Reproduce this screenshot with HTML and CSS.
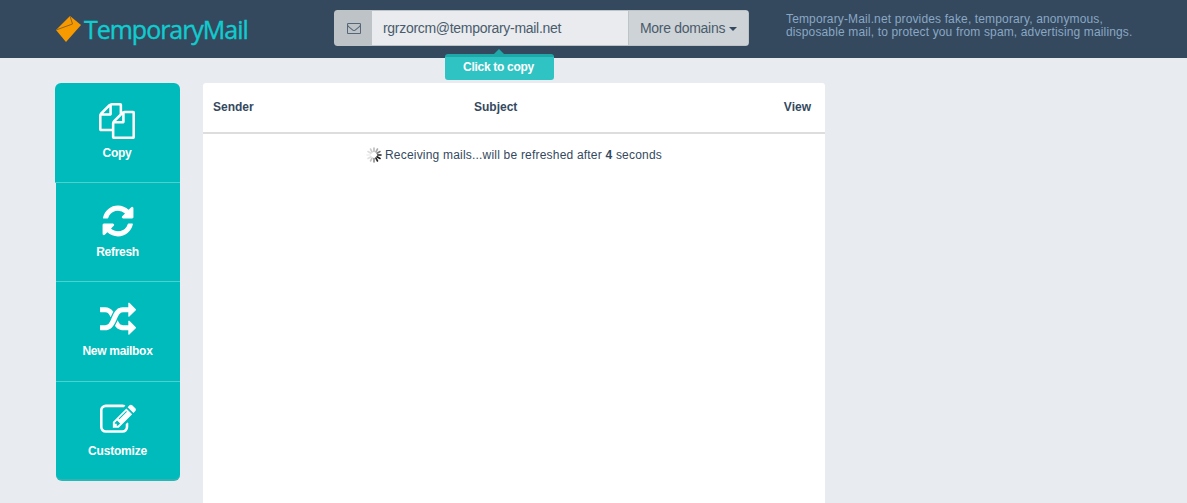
FILE: index.html
```html
<!DOCTYPE html>
<html lang="en">
<head>
<meta charset="utf-8">
<title>TemporaryMail</title>
<link rel="stylesheet" href="styles.css">
</head>
<body>
<header class="topbar">
  <a class="logo">
    <svg class="logo-icon" viewBox="0 0 26 28" aria-hidden="true">
      <path class="env-a" d="M1 15 L15 1 L26 10 L11 27 Z"/>
      <path class="env-line" d="M1 15 L17.500 9 L15 1"/>
    </svg>
    <span>TemporaryMail</span>
  </a>
  <div class="address-group">
    <span class="addon"><svg class="env-icon" viewBox="0 0 1792 1792" aria-hidden="true"><path d="M1664 1504v-768q-32 36-69 66-268 206-426 338-51 43-83 67t-86.5 48.5-102.5 24.5h-2q-48 0-102.5-24.5t-86.5-48.5-83-67q-158-132-426-338-37-30-69-66v768q0 13 9.5 22.5t22.5 9.5h1472q13 0 22.5-9.5t9.5-22.5zm0-1051v-24.5l-.5-13-3-12.5-5.5-9-9-7.5-14-2.5h-1472q-13 0-22.5 9.5t-9.5 22.5q0 168 147 284 193 152 401 317 6 5 35 29.5t46 37.5 44.5 31.5 50.5 27.5 43 9h2q20 0 43-9t50.5-27.5 44.5-31.5 46-37.5 35-29.5q208-165 401-317 54-43 100.5-115.5t46.5-131.5zm128-37v1088q0 66-47 113t-113 47h-1472q-66 0-113-47t-47-113v-1088q0-66 47-113t113-47h1472q66 0 113 47t47 113z"/></svg></span>
    <span class="address">rgrzorcm@temporary-mail.net</span>
    <span class="domains">More domains<i class="caret"></i></span>
    <div class="tooltip">Click to copy</div>
  </div>
  <p class="tagline">Temporary-Mail.net provides fake, temporary, anonymous, disposable mail, to protect you from spam, advertising mailings.</p>
</header>
<main class="content">
  <nav class="side">
    <a class="side-item first">
      <svg class="side-icon" viewBox="0 0 1792 1792" aria-hidden="true"><path d="M1696 384q40 0 68 28t28 68v1216q0 40-28 68t-68 28h-960q-40 0-68-28t-28-68v-288h-544q-40 0-68-28t-28-68v-672q0-40 20-88t48-76l408-408q28-28 76-48t88-20h416q40 0 68 28t28 68v328q68-40 128-40h416zm-544 213l-299 299h299v-299zm-640-384l-299 299h299v-299zm196 647l316-316v-416h-384v416q0 40-28 68t-68 28h-416v640h512v-256q0-40 20-88t48-76zm956 804v-1152h-384v416q0 40-28 68t-68 28h-416v640h896z"/></svg>
      <span>Copy</span>
    </a>
    <a class="side-item">
      <svg class="side-icon" viewBox="0 0 1792 1792" aria-hidden="true"><path d="M1639 1056q0 5-1 7-64 268-268 434.5t-478 166.5q-146 0-282.5-55t-243.5-157l-129 129q-19 19-45 19t-45-19-19-45v-448q0-26 19-45t45-19h448q26 0 45 19t19 45-19 45l-137 137q71 66 161 102t187 36q134 0 250-65t186-179q11-17 53-117 8-23 30-23h192q13 0 22.5 9.5t9.5 22.5zm25-800v448q0 26-19 45t-45 19h-448q-26 0-45-19t-19-45 19-45l138-138q-148-137-349-137-134 0-250 65t-186 179q-11 17-53 117-8 23-30 23h-199q-13 0-22.5-9.5t-9.5-22.5v-7q65-268 270-434.5t480-166.5q146 0 284 55.5t245 156.5l130-129q19-19 45-19t45 19 19 45z"/></svg>
      <span>Refresh</span>
    </a>
    <a class="side-item tall">
      <svg class="side-icon" viewBox="0 0 1792 1792" aria-hidden="true"><path d="M666 481q-60 92-137 273-22-45-37-72.5t-40.5-63.5-51-56.5-63-35-81.5-14.5h-224q-14 0-23-9t-9-23v-192q0-14 9-23t23-9h224q250 0 410 225zm1126 799q0 14-9 23l-320 320q-9 9-23 9-13 0-22.5-9.5t-9.5-22.5v-192q-32 0-85 .5t-81 1-73-1-71-5-64-10.5-63-18.5-58-28.5-59-40-55-53.5-56-69.5q59-93 136-273 22 45 37 72.5t40.5 63.5 51 56.5 63 35 81.5 14.5h256v-192q0-14 9-23t23-9q12 0 24 10l319 319q9 9 9 23zm0-896q0 14-9 23l-320 320q-9 9-23 9-13 0-22.5-9.5t-9.5-22.5v-192h-256q-48 0-87 15t-69 45-51 61.5-45 77.5q-32 62-78 171-29 66-49.5 111t-54 105-64 100-74 83-90 68.5-106.5 42-128 16.5h-224q-14 0-23-9t-9-23v-192q0-14 9-23t23-9h224q48 0 87-15t69-45 51-61.5 45-77.5q32-62 78-171 29-66 49.5-111t54-105 64-100 74-83 90-68.5 106.5-42 128-16.5h256v-192q0-14 9-23t23-9q12 0 24 10l319 319q9 9 9 23z"/></svg>
      <span>New mailbox</span>
    </a>
    <a class="side-item last">
      <svg class="side-icon" viewBox="0 0 1792 1792" aria-hidden="true"><path d="M888 1184l116-116-152-152-116 116v56h96v96h56zm440-720q-16-16-33 1l-350 350q-17 17-1 33t33-1l350-350q17-17 1-33zm80 594v190q0 119-84.5 203.5t-203.5 84.5h-832q-119 0-203.5-84.5t-84.5-203.5v-832q0-119 84.5-203.5t203.5-84.5h832q63 0 117 25 15 7 18 23 3 17-9 29l-49 49q-14 14-32 8-23-6-45-6h-832q-66 0-113 47t-47 113v832q0 66 47 113t113 47h832q66 0 113-47t47-113v-126q0-13 9-22l64-64q15-15 35-7t20 29zm-96-738l288 288-672 672h-288v-288zm444 132l-92 92-288-288 92-92q28-28 68-28t68 28l152 152q28 28 28 68t-28 68z"/></svg>
      <span>Customize</span>
    </a>
  </nav>
  <section class="mail-panel">
    <div class="mail-head">
      <span class="col-sender">Sender</span>
      <span class="col-subject">Subject</span>
      <span class="col-view">View</span>
    </div>
    <div class="status">
      <svg class="spinner" viewBox="0 0 16 16" aria-hidden="true">
        <g stroke-width="1.6" stroke-linecap="round">
          <path class="s1" d="M8 1v3.4"/><path class="s2" d="M11.5 2 9.9 5"/><path class="s3" d="M14 4.5l-3 1.7"/>
          <path class="s4" d="M15 8h-3.4"/><path class="s5" d="M14 11.5l-3-1.7"/><path class="s6" d="M11.5 14 9.9 11"/>
          <path class="s7" d="M8 15v-3.4"/><path class="s8" d="M4.5 14 6.100 11"/><path class="s9" d="M2 11.500l3-1.700"/>
          <path class="s10" d="M1 8h3.400"/><path class="s11" d="M2 4.500l3 1.700"/><path class="s12" d="M4.500 2 6.100 5"/>
        </g>
      </svg>
      <span>Receiving mails...will be refreshed after <b>4</b> seconds</span>
    </div>
  </section>
</main>
</body>
</html>
```
FILE: styles.css
```css
* { box-sizing: border-box; }
html, body { margin: 0; height: 100%; overflow: hidden; }
body {
  background: #e8ebf0;
  font-family: "Liberation Sans", Arial, sans-serif;
  font-size: 12px;
  color: #34495e;
}
.topbar {
  height: 58px;
  background: #34495e;
  display: flex;
  align-items: flex-start;
  padding-left: 55px;
}
.logo {
  width: 279px;
  height: 58px;
  display: flex;
  align-items: center;
  gap: 3px;
  color: #10cbcf;
  font-family: "Open Sans", sans-serif;
  font-size: 25px;
  letter-spacing: -1.03px;
  -webkit-text-stroke: .4px #10cbcf;
}
.logo-icon { width: 26px; height: 28px; flex: none; }
.env-a { fill: #f79a00; }
.env-line { fill: none; stroke: #8f6520; stroke-width: 1; }
.address-group {
  position: relative;
  display: flex;
  width: 415px;
  height: 36px;
  margin-top: 10px;
  font-size: 14px;
  letter-spacing: -.3px;
  border: 1px solid #bdc3c7;
  border-radius: 3px;
}
.addon {
  width: 37px;
  background: #bdc3c7;
  display: flex;
  align-items: center;
  justify-content: center;
}
.env-icon { width: 14px; height: 14px; fill: #566676; }
.address {
  flex: 1;
  background: #e9ebef;
  padding-left: 11px;
  line-height: 34px;
  color: #4a5b6c;
}
.domains {
  width: 120px;
  background: #ced3d7;
  border-left: 1px solid #bdc3c7;
  padding-left: 11px;
  line-height: 34px;
  color: #4a5b6c;
}
.caret {
  display: inline-block;
  margin-left: 4px;
  vertical-align: 2px;
  border-top: 4px solid #34495e;
  border-left: 4px solid transparent;
  border-right: 4px solid transparent;
}
.tooltip {
  position: absolute;
  left: 110px;
  top: 43px;
  width: 109px;
  height: 26px;
  padding-right: 2px;
  background: #2fc3c3;
  border-top: 3px solid #1fa8a8;
  border-radius: 3px;
  color: #fff;
  font-weight: bold;
  font-size: 12px;
  text-align: center;
  line-height: 21px;
}
.tooltip::before {
  content: "";
  position: absolute;
  left: 49px;
  top: -8px;
  border-bottom: 5px solid #1fa8a8;
  border-left: 5px solid transparent;
  border-right: 5px solid transparent;
}
.tagline {
  margin: 13px 0 0 37px;
  width: 355px;
  font-size: 12px;
  line-height: 13px;
  letter-spacing: .14px;
  color: #8aa7c4;
}
.content {
  display: flex;
  align-items: flex-start;
  gap: 23px;
  padding: 25px 0 0 55px;
}
.side {
  width: 125px;
  display: flex;
  flex-direction: column;
}
.side-item {
  height: 99px;
  margin-left: 1px;
  background: #00bbbb;
  color: #fff;
  font-weight: bold;
  font-size: 12px;
  letter-spacing: -.3px;
  display: flex;
  flex-direction: column;
  align-items: center;
  padding: 20px 1px 0 0;
  border-bottom: 1px solid #4fd0d0;
}
.side-item.first { margin-left: 0; padding: 20px 1px 0 0; border-radius: 6px 6px 0 0; height: 100px; }
.side-item.first .side-icon { margin-bottom: 7px; }
.side-item.tall { height: 100px; }
.side-item.last { height: 99px; border-bottom: 2px solid #2bb5b5; border-radius: 0 0 6px 6px; letter-spacing: -.2px; }
.side-icon { width: 36px; height: 36px; fill: #fff; margin-bottom: 6px; }
.mail-panel {
  width: 622px;
  height: 500px;
  background: #fff;
  border-radius: 3px 3px 0 0;
}
.mail-head {
  height: 51px;
  border-bottom: 2px solid #dddddd;
  display: grid;
  grid-template-columns: 261px 1fr auto;
  align-items: center;
  padding: 0 14px 2px 10px;
  font-weight: bold;
  font-size: 12px;
}
.status {
  display: flex;
  align-items: center;
  justify-content: center;
  gap: 3px;
  padding: 13px 0 0 0;
  letter-spacing: .2px;
  color: #34495e;
}
.spinner { width: 16px; height: 16px; flex: none; }
.s1 { stroke: #bbb; } .s2 { stroke: #aaa; } .s3 { stroke: #777; } .s4 { stroke: #222; } .s5 { stroke: #111; } .s6 { stroke: #222; }
.s7 { stroke: #888; } .s8 { stroke: #c4c4c4; } .s9 { stroke: #e0e0e0; } .s10 { stroke: #eee; } .s11 { stroke: #ddd; } .s12 { stroke: #ccc; }
```
